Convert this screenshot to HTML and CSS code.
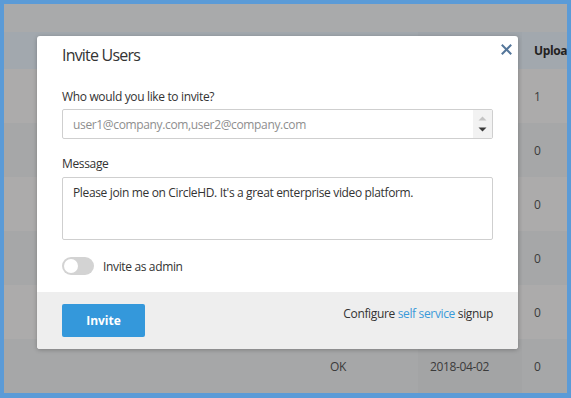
FILE: index.html
```html
<!DOCTYPE html>
<html>
<head>
    <title>Invite Users</title>
    <link rel="stylesheet" href="styles.css">
</head>
<body>
    <div class="frame">
        <div class="page">
            <div class="topbar"></div>
            <div class="table">
                <div class="row head">
                    <div class="cell c-name"></div>
                    <div class="cell c-status"></div>
                    <div class="cell c-date"></div>
                    <div class="cell c-up">Uploads</div>
                </div>
                <div class="row light">
                    <div class="cell c-name"></div>
                    <div class="cell c-status"></div>
                    <div class="cell c-date"></div>
                    <div class="cell c-up">1</div>
                </div>
                <div class="row dark">
                    <div class="cell c-name"></div>
                    <div class="cell c-status"></div>
                    <div class="cell c-date"></div>
                    <div class="cell c-up">0</div>
                </div>
                <div class="row light">
                    <div class="cell c-name"></div>
                    <div class="cell c-status"></div>
                    <div class="cell c-date"></div>
                    <div class="cell c-up">0</div>
                </div>
                <div class="row dark">
                    <div class="cell c-name"></div>
                    <div class="cell c-status"></div>
                    <div class="cell c-date"></div>
                    <div class="cell c-up">0</div>
                </div>
                <div class="row light">
                    <div class="cell c-name"></div>
                    <div class="cell c-status"></div>
                    <div class="cell c-date"></div>
                    <div class="cell c-up">0</div>
                </div>
                <div class="row dark">
                    <div class="cell c-name"></div>
                    <div class="cell c-status">OK</div>
                    <div class="cell c-date">2018-04-02</div>
                    <div class="cell c-up">0</div>
                </div>
            </div>

            <div class="modal">
                <div class="modal-body">
                    <div class="modal-title">
                        <h2>Invite Users</h2>
                        <span class="close">
                            <svg width="11" height="11" viewBox="0 0 11 11">
                                <path d="M1.5 1.5 L9.5 9.5 M9.5 1.5 L1.5 9.5" stroke="#54769a" stroke-width="2" stroke-linecap="square"/>
                            </svg>
                        </span>
                    </div>
                    <label class="field-label">Who would you like to invite?</label>
                    <div class="input">
                        <span class="placeholder">user1@company.com,user2@company.com</span>
                        <span class="spinner">
                            <svg width="9" height="20" viewBox="0 0 9 20">
                                <path d="M0.5 6.5 L4.5 2.5 L8.5 6.5 Z" fill="#c4c4c4"/>
                                <path d="M0.5 13.5 L4.5 17.5 L8.5 13.5 Z" fill="#3a3a3a"/>
                            </svg>
                        </span>
                    </div>
                    <label class="field-label">Message</label>
                    <div class="textarea">Please join me on CircleHD. It's a great enterprise video platform.</div>
                    <div class="toggle-row">
                        <span class="toggle"><span class="knob"></span></span>
                        <span>Invite as admin</span>
                    </div>
                </div>
                <div class="modal-footer">
                    <button type="button">Invite</button>
                    <span class="configure">Configure <a href="#">self service</a> signup</span>
                </div>
            </div>
        </div>
    </div>
</body>
</html>
```

FILE: styles.css
```css
body {
    margin: 0;
    font-family: "Open Sans", Arial, sans-serif;
    background-color: #5b9bd7;
}
.frame {
    width: 571px;
    height: 398px;
    box-sizing: border-box;
    border-style: solid;
    border-color: #5b9bd7;
    border-width: 4px 4px 5px 4px;
    overflow: hidden;
}
.page {
    position: relative;
    height: 100%;
    background-color: #a9aaab;
    color: #3b3b3b;
    font-size: 12px;
    letter-spacing: -0.35px;
}
.topbar {
    height: 28px;
    background-color: #a9aaab;
}
.row {
    display: flex;
    height: 54px;
    align-items: center;
}
.row.head {
    height: 37px;
    background-color: #a2a8ae;
    font-weight: bold;
    color: #222;
}
.row.light {
    background-color: #acabab;
}
.row.dark {
    background-color: #a6a7a8;
}
.cell {
    flex-shrink: 0;
    align-self: stretch;
    display: flex;
    align-items: center;
    box-sizing: border-box;
}
.c-name {
    width: 322px;
}
.c-status {
    width: 92px;
    padding-left: 4px;
}
.c-date {
    width: 104px;
    padding-left: 12px;
    background-color: rgba(0, 0, 0, 0.015);
}
.c-up {
    padding-left: 12px;
    white-space: nowrap;
}
.modal {
    position: absolute;
    left: 33px;
    top: 32px;
    width: 481px;
    height: 313px;
    background: #fff;
    border-radius: 3px;
    box-shadow: 0 1px 4px rgba(0, 0, 0, 0.25);
    display: flex;
    flex-direction: column;
    overflow: hidden;
    color: #333;
    font-size: 12px;
}
.modal-body {
    flex: 1;
    padding: 0 25px;
}
.modal-title {
    display: flex;
    justify-content: space-between;
    height: 47px;
}
.modal-title h2 {
    margin: 8px 0 0;
    font-size: 16px;
    font-weight: normal;
    letter-spacing: -0.8px;
    color: #333;
}
.close {
    margin: 6px -19px 0 0;
}
.field-label {
    display: block;
    margin-top: 5px;
    height: 21px;
    color: #333;
}
.input {
    display: flex;
    align-items: center;
    height: 30px;
    box-sizing: border-box;
    border: 1px solid #cfcfcf;
    border-radius: 2px;
    padding-left: 10px;
    margin-bottom: 16px;
}
.placeholder {
    flex: 1;
    color: #8e8e8e;
}
.spinner {
    width: 19px;
    height: 28px;
    background: #f2f2f2;
    display: flex;
    align-items: center;
    justify-content: center;
}
.textarea {
    height: 63px;
    box-sizing: border-box;
    border: 1px solid #cfcfcf;
    border-radius: 2px;
    padding: 6px 10px;
    margin-top: 1px;
}
.toggle-row {
    display: flex;
    align-items: center;
    gap: 9px;
    margin-top: 17px;
}
.toggle {
    width: 32px;
    height: 18px;
    border-radius: 9px;
    background: #d3d3d3;
    position: relative;
}
.knob {
    position: absolute;
    left: 2px;
    top: 2px;
    width: 14px;
    height: 14px;
    border-radius: 50%;
    background: #fff;
}
.modal-footer {
    height: 57px;
    background: #eeeeee;
    display: flex;
    justify-content: space-between;
    align-items: flex-start;
    padding: 12px 25px 0;
    box-sizing: border-box;
}
button {
    width: 83px;
    height: 33px;
    background-color: #3498db;
    color: #fff;
    border: none;
    border-radius: 2px;
    font-family: "Open Sans", Arial, sans-serif;
    font-weight: bold;
    font-size: 12px;
}
.configure {
    margin-top: 1px;
    color: #333;
}
.configure a {
    color: #3a9ad9;
    text-decoration: none;
}
```
